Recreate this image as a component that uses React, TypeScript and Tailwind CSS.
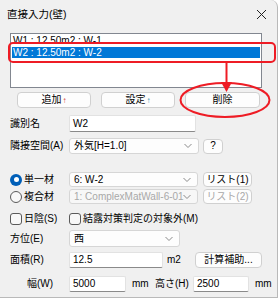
import React from "react";

const font = { fontFamily: '"Liberation Sans", "Noto Sans CJK JP", sans-serif' };

function Chevron() {
  return (
    <svg width="8" height="5" viewBox="0 0 8 5" className="absolute right-[6px] top-1/2 -translate-y-1/2">
      <path d="M0.5 0.5 L4 4 L7.5 0.5" fill="none" stroke="#8a8a8a" strokeWidth="1" />
    </svg>
  );
}

function Select({ value, w, disabled }: { value: string; w: string; disabled?: boolean }) {
  return (
    <div
      className={`relative h-full ${w} rounded-[3px] border border-[#d6d6d6] flex items-center pl-[4px] pr-[16px] overflow-hidden whitespace-nowrap ${
        disabled ? "bg-[#f7f7f7] text-[#a8a8a8]" : "bg-[#fdfdfd] text-black"
      }`}
    >
      {value}
      <Chevron />
    </div>
  );
}

function Input({ value, w }: { value: string; w: string }) {
  return (
    <div className={`h-full ${w} bg-white border border-[#e2e2e2] border-b-[#8a8a8a] rounded-[2px] flex items-center pl-[3px]`}>
      {value}
    </div>
  );
}

function Btn({ children, w, disabled }: { children: React.ReactNode; w: string; disabled?: boolean }) {
  return (
    <div
      className={`h-full ${w} rounded-[4px] border border-[#d0d0d0] bg-[#fdfdfd] flex items-center justify-center whitespace-nowrap ${
        disabled ? "text-[#a8a8a8]" : "text-black"
      }`}
    >
      {children}
    </div>
  );
}

export default function App() {
  return (
    <div className="w-[279px] h-[298px] bg-white relative overflow-hidden text-[10px] leading-none" style={font}>
      <div className="w-[278px] h-[298px] bg-[#f0f0f0] border-r border-b border-[#b9b9b9] rounded-tr-[7px] flex flex-col">
        {/* title bar */}
        <div className="h-[28px] flex items-center justify-between pl-[7px] pr-[10px] shrink-0">
          <span className="text-[10.5px]">直接入力(壁)</span>
          <svg width="11" height="11" viewBox="0 0 11 11">
            <path d="M1 1 L10 10 M10 1 L1 10" stroke="#222" strokeWidth="1" />
          </svg>
        </div>

        {/* list */}
        <div className="mt-[5px] ml-[10px] w-[252px] h-[55px] bg-white border border-[#828790] pt-[1px] px-[1px] shrink-0">
          <div className="h-[12px] flex items-center pl-[1px]">W1 : 12.50m2 : W-1</div>
          <div className="h-[11px] flex items-center pl-[1px] bg-[#0078d7] text-white">W2 : 12.50m2 : W-2</div>
        </div>

        {/* buttons */}
        <div className="mt-[4px] ml-[17px] h-[16px] flex gap-[10px] shrink-0">
          <Btn w="w-[74px]">
            追加<span className="text-[#d03030] text-[8px] ml-[1px] mt-[2px]">↑</span>
          </Btn>
          <Btn w="w-[74px]">
            設定<span className="text-[#3a8fa8] text-[8px] ml-[1px] mt-[2px]">↑</span>
          </Btn>
          <Btn w="w-[75px]">削除</Btn>
        </div>

        {/* 識別名 */}
        <div className="mt-[7px] h-[17px] flex items-center shrink-0">
          <span className="w-[69px] pl-[10px]">識別名</span>
          <Input value="W2" w="w-[127px]" />
        </div>

        {/* 隣接空間 */}
        <div className="mt-[6px] h-[16px] flex items-center shrink-0">
          <span className="w-[69px] pl-[10px] whitespace-nowrap">隣接空間(A)</span>
          <Select value="外気[H=1.0]" w="w-[130px]" />
          <div className="ml-[4px] h-[15px] w-[20px]">
            <Btn w="w-[20px]">?</Btn>
          </div>
        </div>

        {/* 単一材 */}
        <div className="mt-[18px] h-[15px] flex items-center shrink-0">
          <div className="w-[69px] pl-[10px] flex items-center gap-[2px]">
            <span className="w-[12px] h-[12px] rounded-full bg-[#005fb8] flex items-center justify-center">
              <span className="w-[5px] h-[5px] rounded-full bg-white" />
            </span>
            <span>単一材</span>
          </div>
          <Select value="6: W-2" w="w-[129px]" />
          <div className="ml-[5px] h-full">
            <Btn w="w-[49px]">リスト(1)</Btn>
          </div>
        </div>

        {/* 複合材 */}
        <div className="mt-[2px] h-[15px] flex items-center shrink-0">
          <div className="w-[69px] pl-[10px] flex items-center gap-[2px]">
            <span className="w-[12px] h-[12px] rounded-full border border-[#5a5a5a] bg-[#f8f8f8]" />
            <span>複合材</span>
          </div>
          <Select value="1: ComplexMatWall-6-01" w="w-[129px]" disabled />
          <div className="ml-[5px] h-full">
            <Btn w="w-[49px]" disabled>
              リスト(2)
            </Btn>
          </div>
        </div>

        {/* checkboxes */}
        <div className="mt-[8px] h-[14px] flex items-center shrink-0">
          <div className="w-[69px] pl-[10px] flex items-center gap-[2px]">
            <span className="w-[12px] h-[12px] rounded-[3px] border border-[#5a5a5a] bg-[#f8f8f8]" />
            <span>日陰(S)</span>
          </div>
          <div className="flex items-center gap-[2px]">
            <span className="w-[12px] h-[12px] rounded-[3px] border border-[#5a5a5a] bg-[#f8f8f8]" />
            <span>結露対策判定の対象外(M)</span>
          </div>
        </div>

        {/* 方位 */}
        <div className="mt-[4px] h-[17px] flex items-center shrink-0">
          <span className="w-[69px] pl-[10px]">方位(E)</span>
          <Select value="西" w="w-[111px]" />
        </div>

        {/* 面積 */}
        <div className="mt-[5px] h-[16px] flex items-center shrink-0">
          <span className="w-[69px] pl-[10px]">面積(R)</span>
          <Input value="12.5" w="w-[94px]" />
          <span className="ml-[4px] w-[28px]">m2</span>
          <Btn w="w-[67px]">計算補助...</Btn>
        </div>

        {/* 幅 / 高さ */}
        <div className="mt-[8px] h-[16px] flex items-center shrink-0">
          <span className="w-[69px] pl-[27px]">幅(W)</span>
          <Input value="5000" w="w-[57px]" />
          <span className="ml-[6px] w-[23px]">mm</span>
          <span className="w-[38px]">高さ(H)</span>
          <Input value="2500" w="w-[56px]" />
          <span className="ml-[6px]">mm</span>
        </div>
      </div>

      {/* red annotations */}
      <svg className="absolute inset-0 pointer-events-none" width="279" height="298">
        <rect x="9" y="43" width="266" height="19" rx="4" fill="none" stroke="#ee1c25" strokeWidth="2" />
        <line x1="226.5" y1="62" x2="226.5" y2="84" stroke="#ee1c25" strokeWidth="2" />
        <path d="M221 82 L232 82 L226.5 92 Z" fill="#ee1c25" />
        <ellipse cx="225" cy="100" rx="44.5" ry="17" fill="none" stroke="#ee1c25" strokeWidth="2" />
      </svg>
    </div>
  );
}
